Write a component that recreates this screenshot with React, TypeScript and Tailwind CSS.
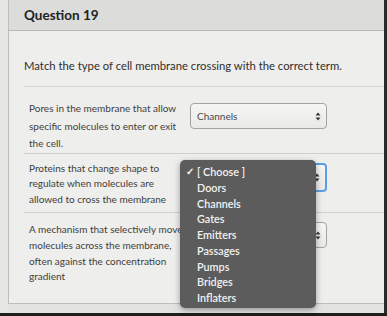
import React from 'react';

const options = ['Doors', 'Channels', 'Gates', 'Emitters', 'Passages', 'Pumps', 'Bridges', 'Inflaters'];

const Arrows: React.FC = () => (
  <svg width="6" height="9" viewBox="0 0 6 9" className="text-[#333]">
    <path d="M3 0.5 L5.5 3.5 H0.5 Z" fill="currentColor" />
    <path d="M3 8.5 L5.5 5.5 H0.5 Z" fill="currentColor" />
  </svg>
);

const Select: React.FC<{ value?: string; focused?: boolean; className?: string }> = ({ value, focused, className }) => (
  <div
    className={`w-[137px] h-[26px] rounded-[4px] bg-gradient-to-b from-[#f6f6f4] to-[#e9e9e7] flex items-center justify-between pl-[6px] pr-[5px] ${
      focused ? 'border-2 border-[#5d9ee6]' : 'border border-[#a3a3a1]'
    } ${className ?? ''}`}
  >
    <span className="text-[10px] text-[#4a4a4a]">{value ?? ''}</span>
    <Arrows />
  </div>
);

const Row: React.FC<{ lines: string[]; lh: string; pt: string; pb: string; selectMt: string; select: React.ReactNode; last?: boolean }> = ({
  lines,
  lh,
  pt,
  pb,
  selectMt,
  select,
  last,
}) => (
  <div className={`flex items-start ${pt} ${pb} ${last ? '' : 'border-b border-[#cfcfcd]'}`}>
    <div className={`w-[166px] shrink-0 pl-[5px] text-[10px] text-[#404040] ${lh}`}>
      {lines.map((l) => (
        <div key={l} className="whitespace-nowrap">
          {l}
        </div>
      ))}
    </div>
    <div className={selectMt}>{select}</div>
  </div>
);

export default function App() {
  return (
    <div className="relative w-[387px] h-[316px] overflow-hidden bg-[#e3e3e1]" style={{ fontFamily: 'Lato, "Open Sans", sans-serif' }}>
      <div className="flex h-[313px]">
        <div className="w-[8px] shrink-0 bg-[#e6e6e4]" />
        <div className="flex-1 h-[304px] border-l border-b border-[#bdbdbb] bg-[#eeeeec] flex flex-col">
          <div className="h-[31px] shrink-0 bg-[#dcdcda] border-b border-[#b9b9b7] flex items-center pl-[15px]">
            <span className="text-[13.5px] leading-[16px] font-bold text-[#222]">Question 19</span>
          </div>
          <div className="pl-[15px]">
            <div className="pt-[27px] pb-[12px] border-b border-[#d6d6d4] text-[11.3px] leading-[16px] text-[#2e2e2e]">
              Match the type of cell membrane crossing with the correct term.
            </div>
            <Row
              lines={['Pores in the membrane that allow', 'specific molecules to enter or exit', 'the cell.']}
              lh="leading-[17.5px]"
              pt="pt-[13px]"
              pb="pb-[0px]"
              selectMt="mt-[3px]"
              select={<Select value="Channels" />}
            />
            <Row
              lines={['Proteins that change shape to', 'regulate when molecules are', 'allowed to cross the membrane']}
              lh="leading-[15.6px]"
              pt="pt-[7px]"
              pb="pb-[5px]"
              selectMt="mt-[2px]"
              select={<Select focused className="h-[29px]" />}
            />
            <Row
              lines={['A mechanism that selectively moves', 'molecules across the membrane,', 'often against the concentration', 'gradient']}
              lh="leading-[15.7px]"
              pt="pt-[9px]"
              pb="pb-[17px]"
              selectMt="mt-[0px]"
              select={<Select className="w-[136px]" />}
              last
            />
          </div>
        </div>
        <div className="w-[3px] shrink-0 bg-[#2a2a2a]" />
      </div>
      <div className="h-[3px] bg-[#1e1e1e]" />

      <div className="absolute left-[180px] top-[160px] w-[136px] h-[148px] rounded-[5px] bg-[#5c5c5c] shadow-[0_2px_6px_rgba(0,0,0,0.35)] pt-[4px] text-[10.8px] font-semibold text-[#f2f2f2] leading-[15.75px]">
        <div className="flex items-center">
          <span className="w-[17px] text-right pr-[3px] text-[10px]">✓</span>
          <span>[ Choose ]</span>
        </div>
        {options.map((o) => (
          <div key={o} className="pl-[17px]">
            {o}
          </div>
        ))}
      </div>
    </div>
  );
}
